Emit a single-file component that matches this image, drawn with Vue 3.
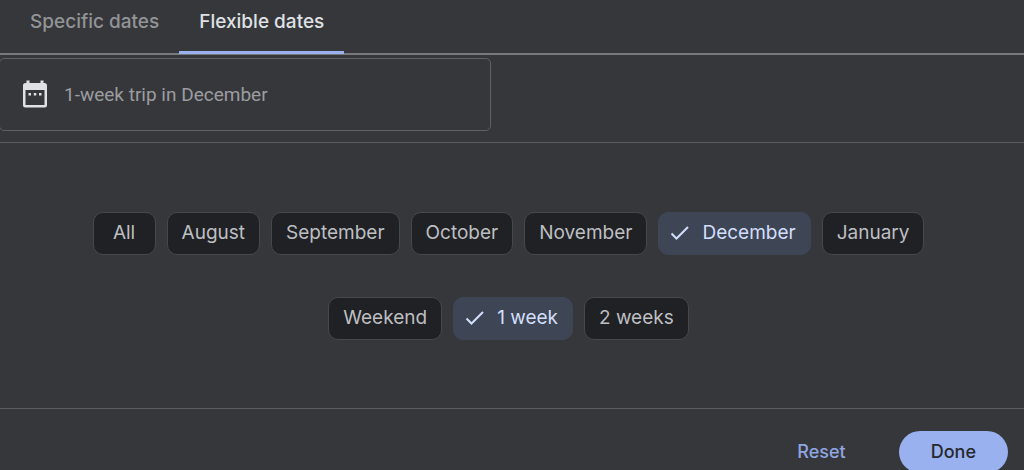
<script setup>
import { ref } from 'vue'

const tabs = ['Specific dates', 'Flexible dates']
const months = ['All', 'August', 'September', 'October', 'November', 'December', 'January']
const lengths = ['Weekend', '1 week', '2 weeks']

const tab = ref('Flexible dates')
const month = ref('December')
const length = ref('1 week')
const trip = ref('1-week trip in December')

function reset() {
  month.value = 'All'
  length.value = '1 week'
}
</script>

<template>
  <main class="picker">
    <nav class="tabs" role="tablist">
      <button
        v-for="name in tabs"
        :key="name"
        type="button"
        role="tab"
        class="tab"
        :class="{ active: tab === name }"
        :aria-selected="tab === name"
        @click="tab = name"
      >{{ name }}</button>
    </nav>

    <div class="summary">
      <label class="field">
        <svg class="calendar" viewBox="0 0 26 28" aria-hidden="true">
          <path
            fill="#dfe1e5"
            fill-rule="evenodd"
            d="M4.500 0.500h3v2.500h11v-2.500h3v2.500h1a2.500 2.500 0 0 1 2.500 2.500v19.500a2.500 2.500 0 0 1-2.500 2.500h-19a2.500 2.500 0 0 1-2.500-2.500v-19.500a2.500 2.500 0 0 1 2.500-2.500h1zM3.500 10v15h19v-15z"
          />
          <path fill="#dfe1e5" d="M6.500 13h2.500v2.500h-2.500zM11.800 13h2.500v2.500h-2.500zM17 13h2.500v2.500h-2.500z" />
        </svg>
        <input v-model="trip" class="trip" type="text" aria-label="Trip dates" readonly />
      </label>
    </div>

    <section class="choices">
      <div class="chips" role="group" aria-label="Month">
        <button
          v-for="name in months"
          :key="name"
          type="button"
          class="chip"
          :class="{ selected: month === name }"
          :aria-pressed="month === name"
          @click="month = name"
        >
          <svg v-if="month === name" class="check" viewBox="0 0 20 16" aria-hidden="true">
            <path d="M1.500 8.500l5 5L18 2" fill="none" stroke="currentColor" stroke-width="2" />
          </svg>
          {{ name }}
        </button>
      </div>
      <div class="chips" role="group" aria-label="Trip length">
        <button
          v-for="name in lengths"
          :key="name"
          type="button"
          class="chip"
          :class="{ selected: length === name }"
          :aria-pressed="length === name"
          @click="length = name"
        >
          <svg v-if="length === name" class="check" viewBox="0 0 20 16" aria-hidden="true">
            <path d="M1.500 8.500l5 5L18 2" fill="none" stroke="currentColor" stroke-width="2" />
          </svg>
          {{ name }}
        </button>
      </div>
    </section>

    <footer class="actions">
      <button type="button" class="reset" @click="reset">Reset</button>
      <button type="button" class="done">Done</button>
    </footer>
  </main>
</template>

<style>
body {
  background: #36373a;
  overflow: hidden;
}
</style>

<style scoped>
.picker {
  display: flex;
  flex-direction: column;
  color: #bdc1c6;
  font-family: Inter, "Open Sans", sans-serif;
  font-size: 19px;
  font-weight: 500;
  line-height: 24px;
}

button,
input {
  margin: 0;
  border: 0;
  font: inherit;
  color: inherit;
  background: none;
}

button {
  cursor: pointer;
}

.tabs {
  display: flex;
  padding-left: 10px;
  border-bottom: 2px solid #77797c;
}

.tab {
  height: 54px;
  margin-bottom: -1px;
  padding: 0 20px 8px;
  border-bottom: 3px solid transparent;
  color: #929497;
}

.tab.active {
  border-bottom-color: #9ab1ef;
  color: #dfe1e5;
}

.summary {
  padding: 3px 0 11px;
  border-bottom: 1px solid #5b5c5f;
}

.field {
  display: flex;
  align-items: center;
  box-sizing: border-box;
  width: 48%;
  min-width: 320px;
  height: 73px;
  margin-left: -1px;
  padding: 0 22px 2px;
  gap: 16px;
  border: 1px solid #5f6164;
  border-radius: 5px;
}

.calendar {
  flex: none;
  width: 26px;
  height: 28px;
}

.trip {
  flex: 1;
  min-width: 0;
  padding: 2px 0 0;
  outline: 0;
  color: #9b9da0;
  font-family: Roboto, sans-serif;
  font-weight: 400;
}

.choices {
  display: flex;
  flex-direction: column;
  gap: 42px;
  padding: 69px 7px 68px 0;
}

.chips {
  display: flex;
  flex-wrap: wrap;
  justify-content: center;
  gap: 11px;
}

.chip {
  display: flex;
  align-items: center;
  justify-content: center;
  min-width: 63px;
  height: 43px;
  padding: 0 14px 2px;
  border: 1px solid #47484b;
  border-radius: 10px;
  background: #202124;
  color: #bdbfc2;
  font-weight: 400;
}

.chip.selected {
  padding-left: 11px;
  border-color: #3e4555;
  background: #3e4555;
  color: #d2dffb;
}

.check {
  width: 20px;
  height: 16px;
  margin-right: 12px;
}

.actions {
  display: flex;
  justify-content: flex-end;
  padding: 22px 16px 0;
  gap: 32px;
  border-top: 1px solid #5b5c5f;
}

.reset,
.done {
  height: 42px;
  border-radius: 21px;
  font-size: 18px;
}

.reset {
  padding: 0 21px;
  color: #8fa6e2;
}

.done {
  padding: 0 32px;
  background: #9ab1ef;
  color: #26282d;
}
</style>
